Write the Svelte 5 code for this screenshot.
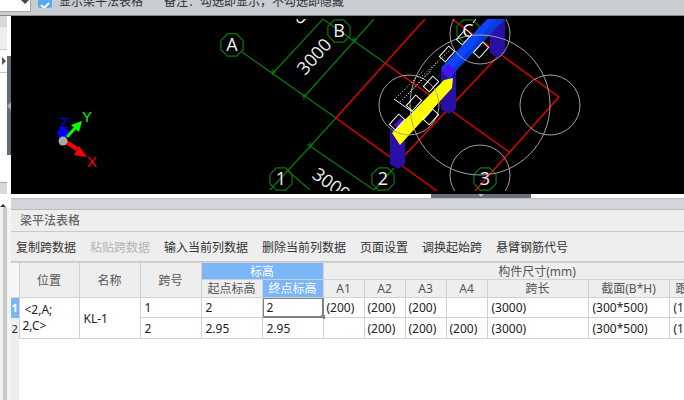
<script>
  const columns = [
    { x: 390, top: 130, bottom: 164 },
    { x: 441, top: 70, bottom: 109 },
    { x: 490, top: 15, bottom: 53 },
  ];
  const axisLabels = [
    { t: "A", x: 232, y: 51 },
    { t: "B", x: 339, y: 37 },
    { t: "C", x: 468, y: 37 },
    { t: "1", x: 281, y: 185 },
    { t: "2", x: 383, y: 185 },
    { t: "3", x: 485, y: 185 },
  ];
  const greens = [
    [242, 52, 336, 118],
    [336, 118, 270, 190],
    [323, 19, 385, 63],
    [323, 19, 273, 73],
    [374, 19, 304, 97],
    [310, 146, 374, 190],
    [287, 170, 310, 190],
    [394, 168, 374, 190],
  ];
  const ticks = [[273, 73], [304, 97], [354, 41], [310, 146]];
  const reds = [
    [425, 19, 336, 118],
    [336, 118, 437, 191],
    [385, 63, 509, 152],
    [452, 19, 559, 97],
    [559, 97, 475, 191],
    [499, 55, 405, 155],
  ];
  const rings = [
    [409, 105, 30],
    [480, 105, 70],
    [550, 105, 30],
    [480, 175, 30],
    [480, 34, 30],
  ];
  const stirrups = [
    [447, 54],
    [431, 84],
    [414, 103],
    [397, 122],
    [431, 117],
    [481, 50],
    [464, 37],
  ];
  const dotted = [
    [394, 100, 424, 70],
    [400, 102, 432, 70],
    [408, 94, 438, 62],
    [420, 78, 450, 50],
  ];
  const toolbar = [
    { t: "复制跨数据" },
    { t: "粘贴跨数据", off: true },
    { t: "输入当前列数据" },
    { t: "删除当前列数据" },
    { t: "页面设置" },
    { t: "调换起始跨" },
    { t: "悬臂钢筋代号" },
  ];
  const heads = ["A1", "A2", "A3", "A4", "跨长", "截面(B*H)", "跟"];
  const rows = [
    { n: "1", span: "1", start: "2", end: "2", a: ["(200)", "(200)", "(200)", ""] },
    { n: "2", span: "2", start: "2.95", end: "2.95", a: ["", "(200)", "(200)", "(200)"] },
  ];

  function octagon(cx, cy, r) {
    let pts = [];
    for (let i = 0; i < 8; i++) {
      const a = (Math.PI / 4) * i + Math.PI / 8;
      pts.push((cx + r * Math.cos(a)).toFixed(1) + "," + (cy + r * Math.sin(a)).toFixed(1));
    }
    return pts.join(" ");
  }
</script>

<div class="app">
  <div class="topbar">
    <div class="select"><span class="caret"></span></div>
    <span class="check">
      <svg width="14" height="14" viewBox="0 0 14 14">
        <path d="M3 5l3 3 5-5" fill="none" stroke="#fff" stroke-width="2" />
      </svg>
    </span>
    <span class="show">显示梁平法表格</span>
    <span class="note">备注：勾选即显示，不勾选即隐藏</span>
  </div>

  <div class="main">
    <div class="rail">
      <div class="rail-top">
        <div class="dock">
          <div class="dock-head"></div>
          <div class="dock-row grey"></div>
          <div class="dock-row"><span class="arrow"></span></div>
          <div class="dock-row tall"></div>
          <div class="dock-head"></div>
        </div>
        <div class="strip">
          <div class="grip"><span class="grip-arrow"></span></div>
        </div>
      </div>
      <div class="rail-bottom">
        <span class="thumb"></span>
      </div>
    </div>

    <div class="content">
      <svg class="canvas" width="673" height="178" viewBox="11 16 673 178">
        <defs>
          <clipPath id="view"><rect x="11" y="19" width="673" height="172" /></clipPath>
        </defs>
        <rect x="11" y="16" width="673" height="178" fill="#000" />
        <g clip-path="url(#view)">
          {#each greens as l}
            <line x1={l[0]} y1={l[1]} x2={l[2]} y2={l[3]} stroke="#0a7a0a" stroke-width="1.2" />
          {/each}
          {#each ticks as t}
            <path d="M{t[0] - 3} {t[1] - 1}h6M{t[0]} {t[1] - 4}v7" stroke="#0a7a0a" fill="none" />
          {/each}
          {#each reds as l}
            <line x1={l[0]} y1={l[1]} x2={l[2]} y2={l[3]} stroke="#f00000" stroke-width="1.3" />
          {/each}
          {#each axisLabels as a}
            <polygon points={octagon(a.x, a.y - 6, 12)} fill="none" stroke="#0a7a0a" stroke-width="1.2" />
            <text class="cad" x={a.x} y={a.y} text-anchor="middle">{a.t}</text>
          {/each}
          <text class="cad" transform="translate(305 76) rotate(-48)">3000</text>
          <text class="cad" transform="translate(311 177) rotate(36)">3000</text>
          <text class="cad" transform="translate(269 1) rotate(36)">3000</text>

          {#each columns as c}
            <path
              d="M{c.x} {c.top}h15v{c.bottom - c.top}l-7 5l-8 -5z"
              fill="#2a0fa6"
            />
          {/each}

          <polygon points="441,70 490,19 505,19 455,72 449,80" fill="#0a3ad8" />
          <polygon points="441,68 491,15 500,15 449,73" fill="#0b45ff" />
          <polygon points="441,70 449,64 455,70 448,77" fill="#4a10f0" />
          <polygon points="392,133 444,80 453,78 452,88 400,145" fill="#ffff00" />
          <polygon points="394,125 401,118 403,122 397,128" fill="#4a10f0" />

          {#each rings as r}
            <circle cx={r[0]} cy={r[1]} r={r[2]} fill="none" stroke="#a0a0a0" stroke-width="1" />
          {/each}
          {#each stirrups as s}
            <rect
              x={s[0] - 7}
              y={s[1] - 4}
              width="14"
              height="8"
              transform="rotate(-48 {s[0]} {s[1]})"
              fill="none"
              stroke="#fff"
              stroke-width="1"
            />
          {/each}
          {#each dotted as d}
            <line
              x1={d[0]}
              y1={d[1]}
              x2={d[2]}
              y2={d[3]}
              stroke="#fff"
              stroke-width="1"
              stroke-dasharray="1 2"
            />
          {/each}
          <path d="M394 99l20 14M476 19l-3 4" stroke="#fff" fill="none" />
        </g>

        <g class="triad">
          <path d="M63 133v8" stroke="#0000ff" stroke-width="4" />
          <circle cx="63" cy="133" r="5.5" fill="#0000ff" />
          <path d="M67 137l9-10" stroke="#00ff00" stroke-width="3" />
          <polygon points="82,121 79,132 71,125" fill="#00ff00" />
          <path d="M66 142l11 7" stroke="#ff0000" stroke-width="4" />
          <polygon points="87,157 74,155 79,146" fill="#ff0000" />
          <circle cx="63" cy="141" r="4.5" fill="#aaa" />
          <text x="64" y="128" fill="#0000ff" text-anchor="middle">Z</text>
          <text x="87" y="122" fill="#00ff00" text-anchor="middle">Y</text>
          <text x="92" y="167" fill="#ff0000" text-anchor="middle">X</text>
        </g>
      </svg>

      <div class="splitter">
        <div class="handle"><span class="handle-arrow"></span></div>
      </div>

      <div class="panel">
        <div class="caption"></div>
        <div class="title">梁平法表格</div>
        <div class="tools">
          {#each toolbar as b}
            <span class:off={b.off}>{b.t}</span>
          {/each}
        </div>
        <div class="grid-wrap">
          <table>
            <colgroup>
              <col style="width:8px" />
              <col style="width:60px" />
              <col style="width:61px" />
              <col style="width:61px" />
              <col style="width:61px" />
              <col style="width:61px" />
              <col style="width:41px" />
              <col style="width:41px" />
              <col style="width:41px" />
              <col style="width:41px" />
              <col style="width:101px" />
              <col style="width:81px" />
              <col style="width:82px" />
            </colgroup>
            <thead>
              <tr class="h1">
                <th rowspan="2" class="corner"></th>
                <th rowspan="2">位置</th>
                <th rowspan="2">名称</th>
                <th rowspan="2">跨号</th>
                <th colspan="2" class="hot">标高</th>
                <th colspan="7">构件尺寸(mm)</th>
              </tr>
              <tr class="h2">
                <th>起点标高</th>
                <th class="hot">终点标高</th>
                {#each heads as h, i}
                  <th class:lastHead={i === 6}>{h}</th>
                {/each}
              </tr>
            </thead>
            <tbody>
              {#each rows as r, i}
                <tr class={i === 0 ? "r1" : "r2"}>
                  <td class="num" class:sel={i === 0}>{r.n}</td>
                  {#if i === 0}
                    <td rowspan="2" class="pos">&lt;2,A;<br />2,C&gt;</td>
                    <td rowspan="2">KL-1</td>
                  {/if}
                  <td>{r.span}</td>
                  <td>{r.start}</td>
                  <td class="edit">
                    {r.end}
                    {#if i === 0}
                      <span class="cursor"></span>
                    {/if}
                  </td>
                  {#each r.a as v}
                    <td class="tight">{v}</td>
                  {/each}
                  <td>(3000)</td>
                  <td>(300*500)</td>
                  <td>(1</td>
                </tr>
              {/each}
            </tbody>
          </table>
          <div class="gutter"></div>
        </div>
      </div>
    </div>
  </div>
</div>

<style>
  :global(body) {
    margin: 0;
  }

  .app {
    width: 684px;
    height: 400px;
    display: flex;
    flex-direction: column;
    overflow: hidden;
    background: #fff;
    font-family: "Noto Sans", "Noto Sans CJK SC", sans-serif;
    font-size: 12px;
    color: #333;
  }

  .topbar {
    height: 15px;
    flex: none;
    display: flex;
    align-items: flex-start;
    overflow: hidden;
    background: #c9ccd1;
    border-bottom: 1px solid #85888c;
  }

  .select {
    width: 30px;
    height: 11px;
    flex: none;
    position: relative;
    background: #fff;
    border-right: 1px solid #a8a8a8;
    border-bottom: 1px solid #a8a8a8;
  }

  .caret {
    position: absolute;
    left: 21px;
    top: 0;
    border: 4px solid transparent;
    border-top-color: #444;
  }

  .check {
    width: 14px;
    height: 8px;
    margin-left: 7px;
    flex: none;
    overflow: hidden;
    background: #5aa7f5;
    border-radius: 0 0 2px 2px;
  }

  .check svg {
    display: block;
  }

  .show,
  .note {
    line-height: 16px;
    margin-top: -6px;
    white-space: nowrap;
  }

  .show {
    margin-left: 7px;
  }

  .note {
    margin-left: 21px;
  }

  .main {
    flex: 1;
    display: flex;
    min-height: 0;
  }

  .rail {
    width: 11px;
    flex: none;
    display: flex;
    flex-direction: column;
    background: #fff;
  }

  .rail-top {
    height: 178px;
    flex: none;
    display: flex;
  }

  .dock {
    width: 7px;
    flex: none;
    display: flex;
    flex-direction: column;
  }

  .dock-head {
    height: 11px;
    flex: none;
    background: #d8d8d8;
  }

  .dock-row {
    height: 22px;
    flex: none;
    position: relative;
    background: #fff;
    border-bottom: 1px solid #c8c8c8;
  }

  .dock-row.grey {
    background: #eee;
  }

  .dock-row.tall {
    flex: 1;
    background: #fff;
    border-bottom: 1px solid #aaa;
  }

  .arrow {
    position: absolute;
    left: 2px;
    top: 7px;
    border: 4px solid transparent;
    border-left-color: #555;
  }

  .strip {
    flex: 1;
    padding-top: 40px;
    background: #fff;
  }

  .grip {
    height: 99px;
    position: relative;
    background: #5f6b76;
  }

  .grip-arrow {
    position: absolute;
    left: 0;
    top: 46px;
    border: 4px solid transparent;
    border-left-width: 0;
    border-right-color: #a9afb5;
  }

  .rail-bottom {
    flex: 1;
    position: relative;
    margin-top: 13px;
    background: linear-gradient(to right, #f2f2f2 3px, #c9c9c9 3px, #c9c9c9 7px, #f5f5f5 7px);
  }

  .thumb {
    position: absolute;
    left: 0;
    top: -6px;
    border: 3px solid transparent;
    border-bottom-color: #333;
  }

  .content {
    flex: 1;
    min-width: 0;
    display: flex;
    flex-direction: column;
  }

  .canvas {
    display: block;
    flex: none;
  }

  .cad {
    font-family: "Open Sans", sans-serif;
    font-size: 18px;
    fill: #eee;
  }

  .triad text {
    font-family: "Liberation Sans", sans-serif;
    font-size: 15px;
  }

  .splitter {
    height: 4px;
    flex: none;
    display: flex;
    padding-left: 420px;
    background: #fff;
  }

  .handle {
    width: 100px;
    display: flex;
    justify-content: center;
    background: #66717c;
  }

  .handle-arrow {
    border: 3px solid transparent;
    border-bottom-width: 0;
    border-top-color: #b8bdc2;
  }

  .panel {
    flex: 1;
    min-height: 0;
    display: flex;
    flex-direction: column;
    border-top: 1px solid #bcbcbc;
    background: #fff;
  }

  .caption {
    height: 10px;
    flex: none;
    background: #d3d5da;
    border-bottom: 1px solid #bcbcbc;
  }

  .title {
    height: 21px;
    flex: none;
    padding-left: 9px;
    line-height: 21px;
    font-weight: 500;
    color: #666;
    background: #eee;
    border-bottom: 1px solid #c8c8c8;
  }

  .tools {
    height: 30px;
    flex: none;
    display: flex;
    gap: 14px;
    align-items: center;
    padding-left: 5px;
    background: #eee;
    border-bottom: 1px solid #c8c8c8;
    box-sizing: border-box;
    white-space: nowrap;
  }

  .tools .off {
    color: #b5b5b5;
  }

  .grid-wrap {
    flex: 1;
    min-height: 0;
    position: relative;
    overflow: hidden;
  }

  table {
    width: 740px;
    table-layout: fixed;
    border-collapse: collapse;
    position: relative;
    z-index: 1;
  }

  th,
  td {
    padding: 0;
    overflow: hidden;
    white-space: nowrap;
    font-weight: 400;
    border: 1px solid #d2d2d2;
    box-sizing: border-box;
  }

  th {
    background: #eee;
    color: #555;
    text-align: center;
  }

  .h1 th {
    height: 17px;
    line-height: 15px;
  }

  .h2 th {
    height: 18px;
    line-height: 16px;
  }

  th.corner {
    background: #f6f6f6;
    border-left: 0;
  }

  th.hot {
    background: #7ab6f8;
    color: #fff;
  }

  th.lastHead {
    text-align: left;
    padding-left: 6px;
  }

  td {
    padding-left: 4px;
    background: #fff;
    color: #222;
  }

  .r1 td {
    height: 20px;
  }

  .r2 td {
    height: 21px;
  }

  td.tight {
    padding-left: 3px;
  }

  td.num {
    padding: 0;
    text-align: center;
    background: #eee;
    border-left: 0;
    border-top: 0;
    border-bottom: 0;
    font-size: 11px;
  }

  td.num.sel {
    background: #7ab6f8;
    color: #fff;
    font-weight: 700;
  }

  td.pos {
    padding-left: 3px;
    line-height: 16px;
    text-indent: 2px;
  }

  td.edit {
    position: relative;
    overflow: visible;
  }

  .cursor {
    position: absolute;
    left: 0;
    top: 0;
    right: -1px;
    bottom: -1px;
    border: 2px solid #808080;
    border-top-width: 1px;
    border-left-width: 1px;
  }

  .cursor::after {
    content: "";
    position: absolute;
    right: -3px;
    bottom: -3px;
    width: 4px;
    height: 4px;
    background: #808080;
  }

  .gutter {
    position: absolute;
    left: 0;
    top: 0;
    bottom: 0;
    width: 8px;
    background: #eee;
  }
</style>
